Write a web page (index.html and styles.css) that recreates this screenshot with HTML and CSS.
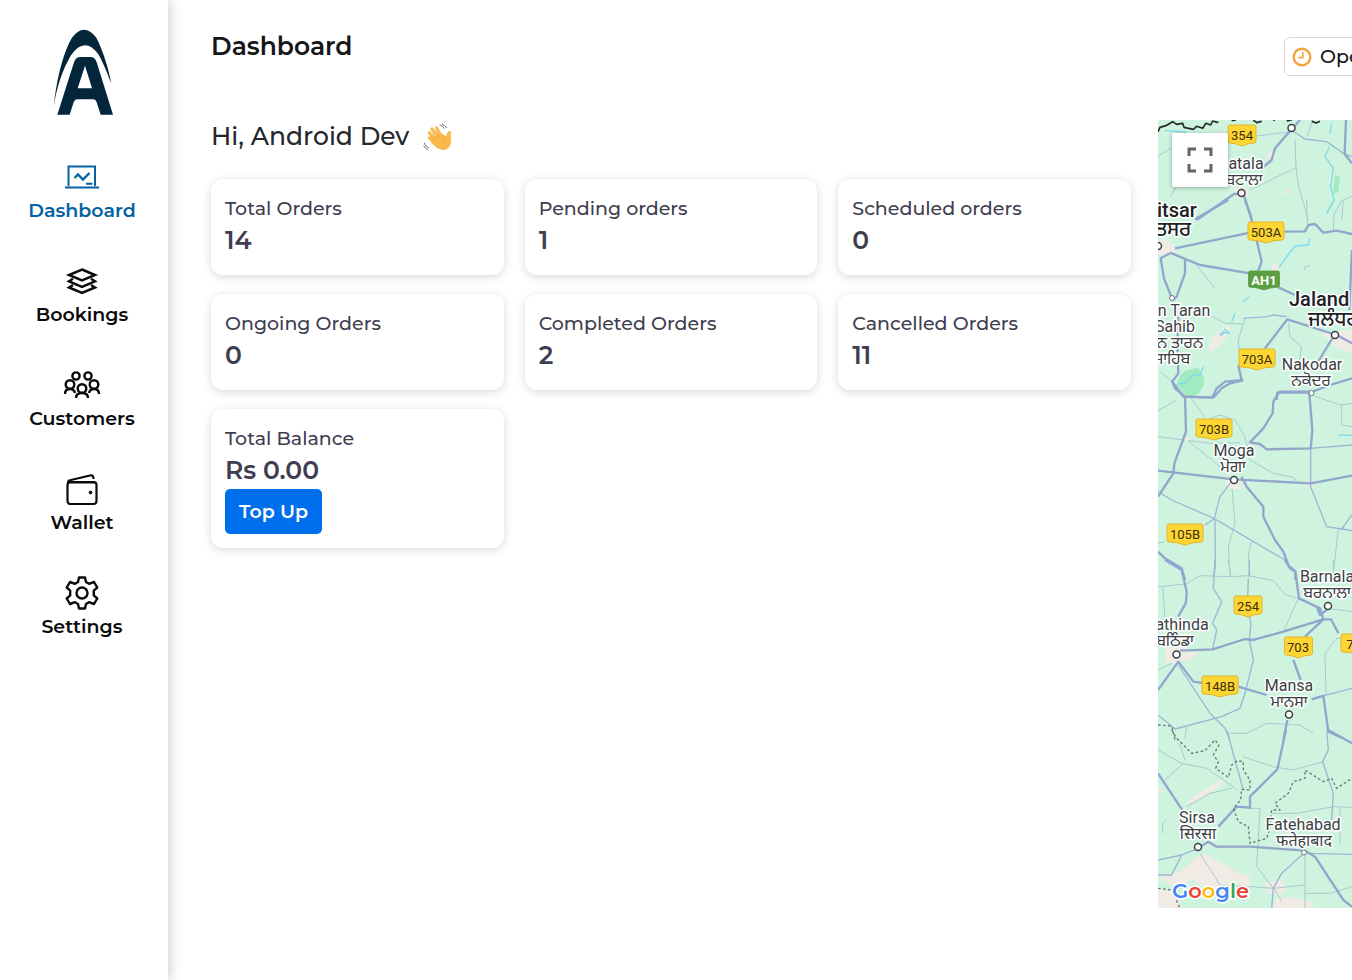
FILE: index.html
```html
<!DOCTYPE html>
<html lang="en">
<head>
<meta charset="utf-8">
<title>Dashboard</title>
<link rel="stylesheet" href="styles.css">
</head>
<body>
<div class="app">
  <aside class="sidebar">
    <a class="brand" href="#" aria-label="Home">
      <svg width="62" height="88" viewBox="158 86 186 264" fill="#04263a">
        <path d="M160 320C170 225 192 150 215 112Q251 65 288 112C308 150 325 205 333 250C320 215 307 184 295 163Q253 105 211 166C187 208 169 259 160 320Z"/>
        <path fill-rule="evenodd" d="M171 343L221 186Q226 170 241 170H270Q284 170 289 186L338 343H301L289 306Q286 297 278 297H230Q223 297 220 306L208 343ZM254 196L232 264H275Z"/>
      </svg>
    </a>
    <nav class="nav">
      <a class="nav-item active" href="#">
        <svg width="36" height="36" viewBox="0 0 36 36" fill="none" stroke="currentColor" stroke-width="2"><path d="M4.500 27V7.500H31V27M1 28.500H35M22 24.800H28.500"/><path stroke-width="2.400" d="M10.500 19L14 15.500L19 20.500L25.500 14"/></svg>
        <span>Dashboard</span>
      </a>
      <a class="nav-item" href="#">
        <svg width="36" height="36" viewBox="0 0 36 36" fill="none" stroke="currentColor" stroke-width="2.500"><path d="M18 6.500L31 12L18 17.500L5 12ZM9 15.800L5 18.300L18 24L31 18.300L27 15.800M9 22L5 24.500L18 30L31 24.500L27 22"/></svg>
        <span>Bookings</span>
      </a>
      <a class="nav-item" href="#">
        <svg width="38" height="36" viewBox="0 0 38 36" fill="none" stroke="currentColor" stroke-width="2.400"><circle cx="13" cy="9" r="3.600"/><circle cx="25" cy="9" r="3.600"/><circle cx="7" cy="17.500" r="4.300"/><circle cx="31" cy="17.500" r="4.300"/><circle cx="19" cy="21.500" r="4.300"/><path d="M2 27Q2 22 7 22Q11 22 12 26M36 27Q36 22 31 22Q27 22 26 26M13 31Q13 26 19 26Q25 26 25 31"/></svg>
        <span>Customers</span>
      </a>
      <a class="nav-item" href="#">
        <svg width="36" height="36" viewBox="0 0 36 36" fill="none" stroke="currentColor" stroke-width="2.200"><rect x="3.500" y="11" width="29" height="22" rx="3"/><path d="M4 12Q4 9 7 9L27 4.300Q29.500 4 29.500 8M4 11.500H31"/><circle cx="26.500" cy="21.500" r="1.400" fill="currentColor" stroke-width="1"/></svg>
        <span>Wallet</span>
      </a>
      <a class="nav-item" href="#">
        <svg width="36" height="36" viewBox="0 0 36 36" fill="none" stroke="currentColor" stroke-width="2.400" stroke-linejoin="round"><path d="M15 2.500H21L22 7L25 8.800L30 7L33.300 12.500L29.800 15.600V20.400L33.300 23.500L30 29L25 27.200L22 29L21 33.500H15L14 29L11 27.200L6 29L2.700 23.500L6.200 20.400V15.600L2.700 12.500L6 7L11 8.800L14 7Z"/><circle cx="18" cy="18" r="5.500"/></svg>
        <span>Settings</span>
      </a>
    </nav>
  </aside>

  <main class="main">
    <header class="topbar">
      <h1 class="title">Dashboard</h1>
      <div class="status-slot">
        <button class="status" type="button">
          <svg width="20" height="20" viewBox="0 0 20 20" fill="none" stroke="#f5a33c"><circle cx="10" cy="10" r="8.300" stroke-width="2.400"/><path stroke-width="1.700" d="M10.800 5V10.700H6.500"/></svg>
          <span>Open</span>
        </button>
      </div>
    </header>

    <div class="content">
      <section class="overview">
        <h2 class="greeting">
          <span>Hi, Android Dev</span>
          <svg width="30" height="30" viewBox="0 0 90 90" aria-label="Waving hand" role="img">
            <g fill="none" stroke="#f9bd58" stroke-width="10" stroke-linecap="round"><path d="M46 52L27 24M36 58L19 35M55 48L41 21M35 66L19 51"/></g>
            <path fill="#f9b94c" d="M28 50L55 35Q64 43 70 46Q70 34 79 30Q87 29 83 39C82 48 88 60 82 73Q75 89 57 87Q40 84 24 64Z"/>
            <path fill="none" stroke="#e7973a" stroke-width="2" d="M27 37L39 53M35 29L48 46M24 47L34 58M70 46Q60 51 59 63"/>
            <path fill="none" stroke="#777" stroke-width="3" d="M50 12Q61 14 64 23M57 9Q67 13 71 21M3 65Q7 77 18 81M2 74Q6 83 15 87"/>
          </svg>
        </h2>
        <div class="cards">
          <article class="card"><h3>Total Orders</h3><p>14</p></article>
          <article class="card"><h3>Pending orders</h3><p>1</p></article>
          <article class="card"><h3>Scheduled orders</h3><p>0</p></article>
          <article class="card"><h3>Ongoing Orders</h3><p>0</p></article>
          <article class="card"><h3>Completed Orders</h3><p>2</p></article>
          <article class="card"><h3>Cancelled Orders</h3><p>11</p></article>
          <article class="card"><h3>Total Balance</h3><p>Rs 0.00</p><button class="topup" type="button">Top Up</button></article>
        </div>
      </section>

      <section class="map" aria-label="Map">
        <svg class="map-canvas" viewBox="0 0 194 788" preserveAspectRatio="xMinYMin slice">
          <g transform="translate(-8 0) scale(.33333)">
            <g transform="translate(0 -300)">
              <path class="water" d="M45 332L110 336M538 380L525 410L550 445L542 500L552 540L530 580M545 310L540 340"/>
              <path class="wood" d="M555 465L570 470L565 515L548 525Z"/>
              <path class="urban" d="M365 385L378 405L365 425L350 410ZM390 525L415 505L420 515ZM250 505L290 500L295 530L260 535Z"/>
              <path class="minor" d="M24 408L70 380M320 348L425 335M435 360L438 440L445 495L475 600M300 510L438 443M60 530L80 500M575 600L580 540L606 530M470 350L490 300"/>
              <path class="mid" d="M425 330L465 357L530 365L583 402L606 410"/>
              <path class="road" d="M140 600L252 522L280 520L305 600M330 450L365 420L375 385L418 335L450 300M588 300L584 402L606 430"/>
              <path class="border" d="M24 335L30 322L50 316L68 305L80 313L98 310L102 322L130 328L140 319L158 325L168 310L182 315L188 303L205 308M245 302L258 300M310 300L320 308L335 304M370 300L375 301M410 303L425 300M485 304L498 309L510 304"/>
            </g>
            <g transform="translate(0 240)">
              <path class="water" d="M550 5L530 40M480 115L475 135L435 138L410 170L385 205M298 290L278 305M255 340L245 365"/>
              <path class="wood" d="M82 550Q90 505 145 505Q180 545 145 580Q105 610 82 550Z"/>
              <path class="urban" d="M365 195L380 188L388 203L378 215L366 210ZM24 125L45 115L75 140L70 165L24 165ZM175 445L185 415L225 375L242 380L225 420L188 455ZM515 400L606 390V460L560 445Z"/>
              <path class="minor" d="M140 195L195 265M470 0L472 70M550 90L552 45L575 0M150 345L190 350L225 370L280 372M462 212L465 200L480 197M415 370L420 410L455 440L445 500M30 515L85 560M285 355L265 420L268 460"/>
              <path class="mid" d="M280 355L350 350L370 345L410 350"/>
              <path class="road" d="M75 145L300 98M403 95L465 94L475 75L495 72L520 98L560 92L606 102M135 58L235 0M285 0L300 40L322 130L335 185L320 225M60 158L150 195L300 220M385 262L435 285M60 160L32 175L42 235L68 300L80 290L105 220V180M85 350L82 430L85 520L67 545L100 590L190 593L215 565L240 550L275 542L265 495M345 445L412 358L550 402M500 492L555 402L606 430M606 150L598 330M380 600L382 578L480 578L540 555L606 535"/>
              <path class="lake" d="M80 553L105 548L130 525H150L160 500M210 405L225 388L238 400L225 397L215 405Z"/>
            </g>
            <g transform="translate(0 780)">
              <path class="minor" d="M24 92L80 60M120 50L165 112M24 170L180 190L270 188M105 175L210 260M180 115L210 105L255 120L285 170L300 240L370 280L430 292L440 305M484 45L570 75L606 70M575 75V135L606 140M245 310L255 430L235 500L240 587M550 580L565 445M24 490L45 485M300 590L295 530L303 487"/>
              <path class="water" d="M565 165L606 166"/>
              <path class="urban" d="M100 165L125 178L105 185ZM465 310L495 305L488 328ZM225 300L275 300L270 330L235 325Z"/>
              <path class="mid" d="M24 335L65 360L193 416L410 543M240 310L210 350L193 416L165 435M195 416L196 560L190 590M482 205L482 320L530 440L575 447L606 405M575 447L606 452M482 205L606 195"/>
              <path class="road" d="M65 0L75 25L105 50L187 52L200 25L225 5L280 0M105 50L108 155L73 250L70 280L24 350M24 272L250 298L482 310L606 287M484 35H388L370 65L368 100L340 145L300 187L330 192L350 208L482 205L487 150L478 40M275 290L290 320L340 380V410L375 480L400 515L415 555L436 575V600M24 515L45 535L95 565L105 600"/>
            </g>
            <g transform="translate(0 1320)">
              <path class="urban" d="M45 250H110L115 275L148 278L120 300L95 300L85 320L65 305L45 308Z"/>
              <path class="minor" d="M24 80L110 72L150 47L240 50L295 47L370 62L405 103L445 115M38 80L45 175M235 0L242 47M445 115L403 210M530 145L606 155M110 500L105 535M230 520L290 520L350 490L450 495L490 520M606 230L560 235L525 280L528 405M24 330L65 310M550 0V50"/>
              <path class="mid" d="M195 0L190 85L215 125L188 190L200 210L188 268M298 240L310 300L285 400L270 445L215 470L75 507L24 465M295 55L293 110M298 170L303 190L298 240M85 315L180 460L225 505L240 540M490 415L606 385M298 0L297 50"/>
              <path class="road" d="M45 0L95 30L110 95L108 128L85 170M90 272L188 268L285 237L310 240L400 215L520 178L465 230M405 0L420 25L436 35L447 115L510 145L520 178H543L565 220M430 300L452 360M24 390L85 305L130 365L165 370M265 380L350 405M485 418L520 408L535 515L580 535M412 480L400 540M500 140L510 165L530 150"/>
              <path class="dash" d="M24 495L65 498L75 540"/>
            </g>
            <g transform="translate(0 1830)">
              <path class="urban" d="M24 175L42 180L24 195ZM105 222L130 200L215 148L222 155L175 195L130 215ZM130 390L160 370L240 412L265 430L300 440V470L270 480L200 500L130 450L70 470L24 440L90 425ZM24 475L70 480L95 535H24ZM345 460L395 450L410 475L390 500L350 485ZM365 535L380 505L425 500L490 520V535Z"/>
              <path class="minor" d="M85 40L95 60L105 90M24 60L95 100L170 115L260 178M45 150L100 100M110 230L180 190L245 175M278 80L370 110L430 120L520 95M290 235H330L320 410L370 475L465 465M365 250H440L550 230L606 232M465 370V535M150 370L210 465L300 470L370 475M570 230V340M38 310V280L50 270M370 470L395 515M465 490L540 490L606 470"/>
              <path class="mid" d="M230 0L280 180M530 0L535 60L518 95L550 190L545 270M606 373L480 370M24 390L95 375L145 355M24 435H65L95 375M462 370L395 430L370 475L365 535"/>
              <path class="road" d="M408 0L382 118L300 200V233L260 230L205 290M24 130L100 245M535 0L606 40M150 350L175 335L200 350L300 350L465 362L495 380L580 510L606 530"/>
              <path class="dash" d="M65 0L80 25L125 70L165 62L195 30L207 45L190 75L205 95L197 115L235 142L245 105L262 92L280 95L280 120L300 150V180L275 178L272 210L250 235L265 275L295 290L300 340L350 325L358 300L365 240H390L375 220L415 190L430 155L465 145V120L520 155L545 145L560 175L606 145M24 475L65 480L90 535"/>
            </g>
          </g>
          <g class="pins">
            <circle cx="133.500" cy="8" r="3.500"/><circle cx="83.500" cy="73" r="3.500"/><circle cx="0" cy="126" r="3.500"/><circle cx="14" cy="178" r="2.500" class="small"/><circle cx="177" cy="215" r="3.500"/><circle cx="153.500" cy="273" r="2.500" class="small"/><circle cx="76" cy="360" r="3.500"/><circle cx="170" cy="486" r="3.500"/><circle cx="18.500" cy="534.500" r="3.500"/><circle cx="131" cy="594.500" r="3.500"/><circle cx="40" cy="727" r="3.500"/><circle cx="146" cy="732.500" r="2.500" class="small"/>
          </g>
          <defs><path id="shield" d="M-16-10H16Q18-10 18-8V6Q18 8 16 8Q8 8 0 11Q-8 8-16 8Q-18 8-18 6V-8Q-18-10-16-10Z"/><path id="shield-s" d="M-12-10H12Q14-10 14-8V6Q14 8 12 8Q7 8 0 11Q-7 8-12 8Q-14 8-14 6V-8Q-14-10-12-10Z"/></defs>
          <g class="shields">
            <use href="#shield-s" x="84" y="15"/><use href="#shield" x="108" y="112"/><use href="#shield" x="99" y="239"/><use href="#shield" x="56" y="309"/><use href="#shield" x="27" y="414"/><use href="#shield-s" x="90" y="486"/><use href="#shield-s" x="140.500" y="527"/><use href="#shield" x="62" y="566"/><use href="#shield" x="201" y="524"/>
            <use class="green" href="#shield" transform="translate(106 160) scale(.86 .9)"/>
          </g>
          <g class="refs">
            <text x="84" y="20">354</text><text x="108" y="117">503A</text><text x="99" y="244">703A</text><text x="56" y="314">703B</text><text x="27" y="419">105B</text><text x="90" y="491">254</text><text x="140" y="532">703</text><text x="62" y="571">148B</text><text x="192" y="529">7</text><text class="light" x="106" y="165">AH1</text>
          </g>
          <g class="places">
            <text x="88" y="49">atala</text><text x="86" y="65">ਬਟਾਲਾ</text>
            <text x="26" y="196">n Taran</text><text x="17" y="212">Sahib</text><text x="22" y="228">ਨ ਤਾਰਨ</text><text x="14" y="244">ਸਾਹਿਬ</text>
            <text x="154" y="250">Nakodar</text><text x="153" y="266">ਨਕੋਦਰ</text>
            <text x="76" y="336">Moga</text><text x="75" y="352">ਮੋਗਾ</text>
            <text x="169" y="462">Barnala</text><text x="169" y="478">ਬਰਨਾਲਾ</text>
            <text x="24" y="510">athinda</text><text x="17" y="526">ਬਠਿੰਡਾ</text>
            <text x="131" y="571">Mansa</text><text x="131" y="587">ਮਾਨਸਾ</text>
            <text x="39" y="703">Sirsa</text><text lang="hi" x="40" y="719">सिरसा</text>
            <text x="145" y="710">Fatehabad</text><text lang="hi" x="146" y="726">फतेहाबाद</text>
          </g>
          <g class="cities">
            <text x="-1" y="97">itsar</text><text x="-2" y="116">ਤਸਰ</text>
            <text x="131" y="186">Jaland</text><text x="150" y="206">ਜਲੰਧਰ</text>
          </g>
          <text class="google" x="14" y="778"><tspan fill="#4285f4">G</tspan><tspan fill="#ea4335">o</tspan><tspan fill="#fbbc04">o</tspan><tspan fill="#4285f4">g</tspan><tspan fill="#34a853">l</tspan><tspan fill="#ea4335">e</tspan></text>
        </svg>
        <button class="fullscreen" type="button" aria-label="Toggle fullscreen view">
          <svg width="26" height="26" viewBox="0 0 26 26" fill="none" stroke="#666" stroke-width="3"><path d="M2 9V2H9M17 2H24V9M24 17V24H17M9 24H2V17"/></svg>
        </button>
      </section>
    </div>
  </main>
</div>
</body>
</html>
```
FILE: styles.css
```css
* { box-sizing: border-box; }
body {
  margin: 0;
  overflow: hidden;
  background: #fff;
  color: #15161a;
  font-family: Montserrat, Inter, "Open Sans", sans-serif;
}
h1, h2, h3, p { margin: 0; }
button { font: inherit; cursor: pointer; }
svg { display: block; flex: none; }
.app { display: flex; min-height: 100vh; }

.sidebar {
  flex: 0 0 168px;
  padding-top: 29px;
  box-shadow: 2px 0 12px rgba(0, 0, 0, .2);
}
.brand { display: flex; justify-content: center; }
.nav { display: flex; flex-direction: column; gap: 40px; padding: 42px 4px 0 0; }
.nav-item {
  display: flex;
  flex-direction: column;
  align-items: center;
  height: 64px;
  color: #0b0b0b;
  font-size: 19px;
  font-weight: 600;
  line-height: 28px;
  gap: 2px;
  text-decoration: none;
}
.nav-item.active { color: #0562a0; }

.main { flex: 1; min-width: 0; padding-left: 43px; }
.topbar { display: flex; height: 120px; padding-top: 30px; }
.title { flex: 1; font-size: 25px; font-weight: 600; line-height: 32px; }
.status-slot { flex: 0 0 68px; min-width: 0; padding-top: 7px; }
.status {
  display: flex;
  align-items: center;
  gap: 8px;
  width: max-content;
  height: 39px;
  padding: 0 14px 0 7px;
  border: 1px solid #d8d8d8;
  border-radius: 6px;
  background: #fff;
  color: #15161a;
  font-size: 19px;
  font-weight: 500;
}

.content {
  display: grid;
  grid-template-columns: minmax(0, 920fr) minmax(0, 194fr);
  column-gap: 27px;
}
.greeting {
  display: flex;
  align-items: center;
  gap: 14px;
  height: 32px;
  margin-bottom: 27px;
  color: #26272b;
  font-size: 25px;
  font-weight: 500;
}
.cards {
  display: grid;
  grid-template-columns: repeat(3, minmax(0, 1fr));
  gap: 19px 21px;
}
.card {
  min-height: 96px;
  padding: 14px;
  border-radius: 12px;
  background: #fff;
  box-shadow: 0 2px 10px rgba(0, 0, 0, .15);
  color: #3f3d50;
}
.card h3 { font-size: 19px; font-weight: 500; line-height: 31px; }
.card p { font-size: 25px; font-weight: 600; line-height: 33px; }
.topup {
  display: block;
  height: 45px;
  margin-top: 2px;
  padding: 0 14px;
  border: 0;
  border-radius: 5px;
  background: #006fee;
  color: #fff;
  font-size: 19px;
  font-weight: 600;
}

.map {
  position: relative;
  height: calc(100vh - 192px);
  overflow: hidden;
  background: #cef4df;
}
.map-canvas { width: 100%; height: 100%; }
.map-canvas path { fill: none; stroke-linejoin: round; }
.map-canvas .urban { fill: #f0ece5; }
.map-canvas .wood { fill: #a0ebc0; }
.minor { stroke: #a9c9d0; stroke-width: 3; }
.mid { stroke: #9db6d2; stroke-width: 4; }
.road { stroke: #93a5cc; stroke-width: 7; }
.water, .lake { stroke: #83d9ec; stroke-width: 4; }
.border { stroke: #26292b; stroke-width: 5; }
.dash { stroke: #667b72; stroke-width: 4; stroke-dasharray: 8 7; }
.pins circle { fill: #fff; stroke: #3c4043; stroke-width: 1.500; }
.pins .small { stroke: #757b7e; stroke-width: 1; }
.shields { fill: #fdd633; stroke: #e4b52d; stroke-width: 1; }
.map-canvas #shield, .map-canvas #shield-s { fill: inherit; }
.shields .green { fill: #5c9e42; stroke: #5c9e42; }
.refs {
  fill: #3a2f08;
  font: 400 13px Roboto, sans-serif;
  text-anchor: middle;
}
.refs .light { fill: #fff; font-weight: 700; }
.places, .cities {
  fill: #3c4043;
  stroke: #fff;
  stroke-width: 3;
  stroke-linejoin: round;
  paint-order: stroke;
  font-family: Roboto, "Noto Sans", "Noto Sans Gurmukhi", "Noto Sans Devanagari", sans-serif;
  font-size: 16px;
}
.places { text-anchor: middle; }
.cities { fill: #202124; font-size: 20px; font-weight: 500; }
.google {
  stroke: #fff;
  stroke-width: 3;
  paint-order: stroke;
  font: 600 21px "Product Sans", Montserrat, Lato, sans-serif;
}
.fullscreen {
  position: absolute;
  top: 13px;
  left: 14px;
  display: grid;
  place-items: center;
  width: 56px;
  height: 54px;
  padding: 0;
  border: 0;
  border-radius: 2px;
  background: #fff;
  box-shadow: 0 1px 4px rgba(0, 0, 0, .3);
}
```
